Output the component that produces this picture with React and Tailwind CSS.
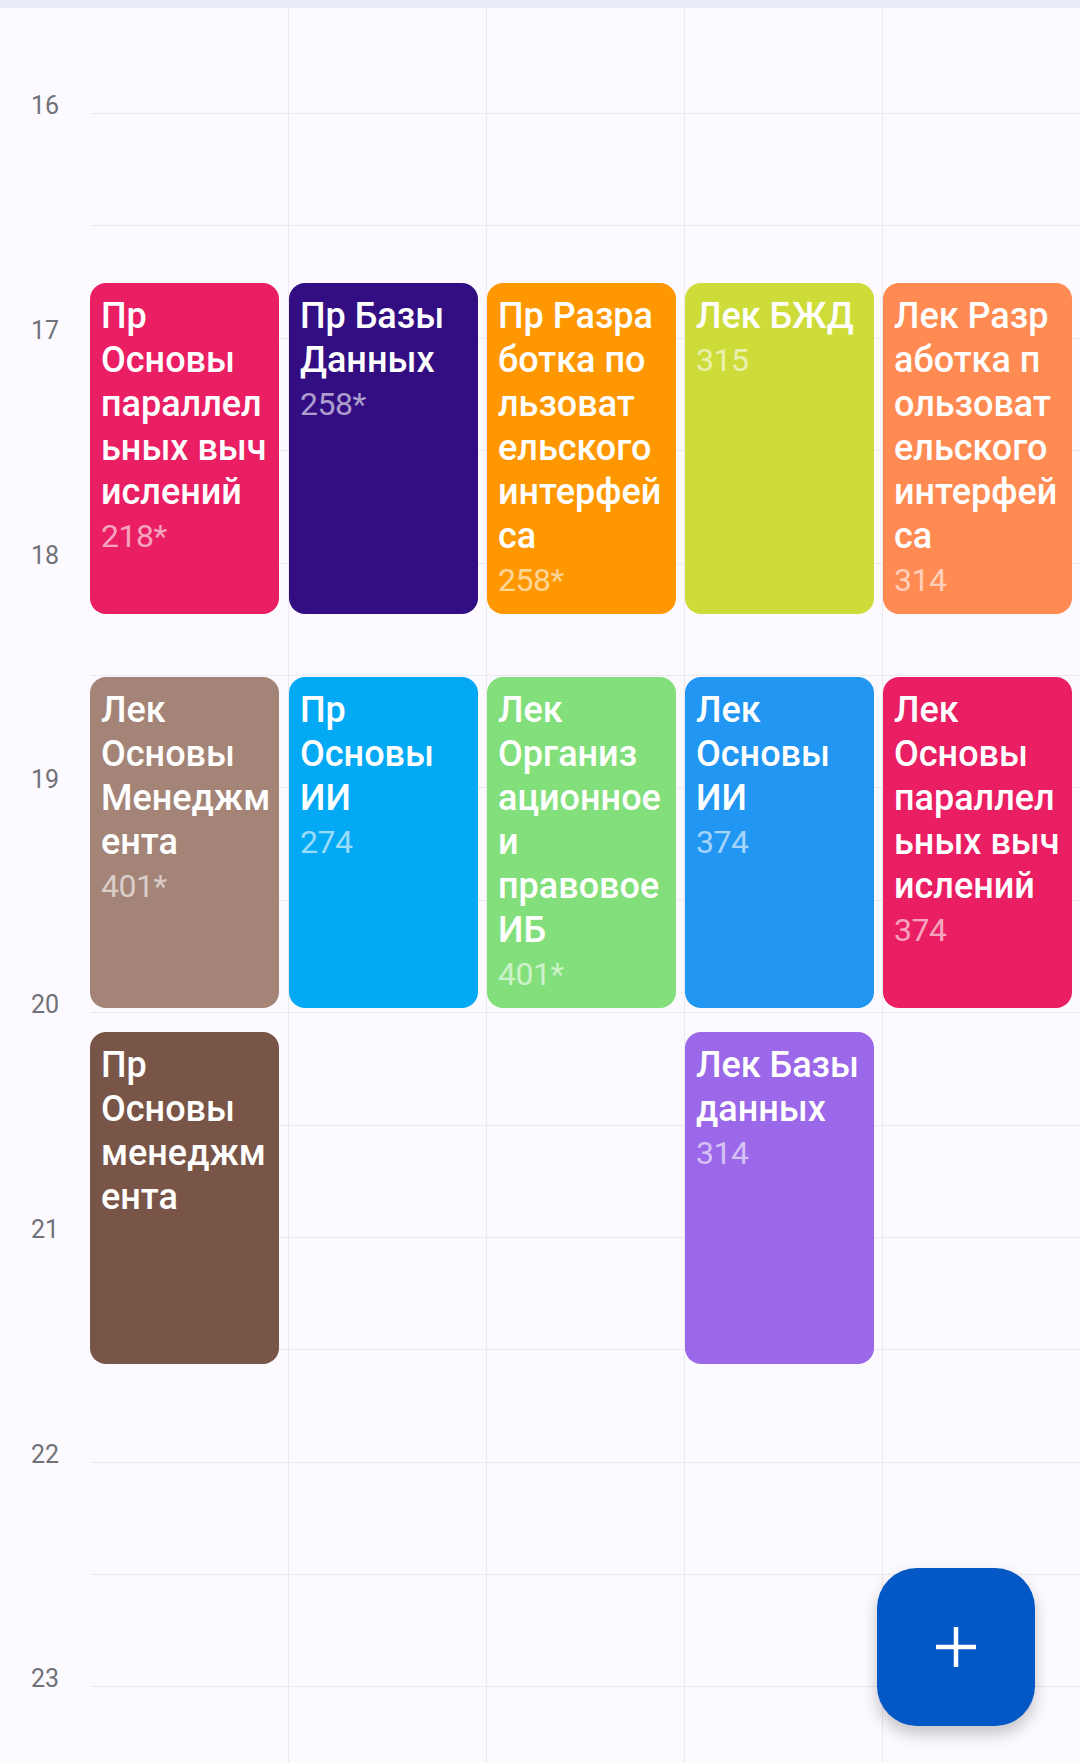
import React from "react";

const HALF_HOUR = 112.4;
const PX_PER_MIN = HALF_HOUR / 30;

const events = [
  { col: 0, start: 45, bg: "bg-[#e91e63]", lines: ["Пр", "Основы", "параллел", "ьных выч", "ислений"], room: "218*" },
  { col: 1, start: 45, bg: "bg-[#330e82]", lines: ["Пр Базы", "Данных"], room: "258*" },
  { col: 2, start: 45, bg: "bg-[#ff9800]", lines: ["Пр Разра", "ботка по", "льзоват", "ельского", "интерфей", "са"], room: "258*" },
  { col: 3, start: 45, bg: "bg-[#cddc39]", lines: ["Лек БЖД"], room: "315" },
  { col: 4, start: 45, bg: "bg-[#ff8a52]", lines: ["Лек Разр", "аботка п", "ользоват", "ельского", "интерфей", "са"], room: "314" },
  { col: 0, start: 150, bg: "bg-[#a38477]", lines: ["Лек", "Основы", "Менеджм", "ента"], room: "401*" },
  { col: 1, start: 150, bg: "bg-[#03a9f4]", lines: ["Пр", "Основы", "ИИ"], room: "274" },
  { col: 2, start: 150, bg: "bg-[#83df7b]", lines: ["Лек", "Организ", "ационное", "и", "правовое", "ИБ"], room: "401*" },
  { col: 3, start: 150, bg: "bg-[#2196f3]", lines: ["Лек", "Основы", "ИИ"], room: "374" },
  { col: 4, start: 150, bg: "bg-[#e91e63]", lines: ["Лек", "Основы", "параллел", "ьных выч", "ислений"], room: "374" },
  { col: 0, start: 245, bg: "bg-[#795548]", lines: ["Пр", "Основы", "менеджм", "ента"], room: "" },
  { col: 3, start: 245, bg: "bg-[#9a68e8]", lines: ["Лек Базы", "данных"], room: "314" },
];

// row index -> hour label (rows end on a half-hour line)
const rows = Array.from({ length: 16 }, (_, i) => (i % 2 === 0 ? String(16 + i / 2) : ""));

function EventCard({ ev }) {
  return (
    <div
      className={`absolute left-0 w-[189px] rounded-[16px] pl-[11px] pt-[11px] overflow-hidden ${ev.bg}`}
      style={{ top: 106.5 + ev.start * PX_PER_MIN, height: 90 * PX_PER_MIN - 6 }}
    >
      {ev.lines.map((line, i) => (
        <div key={i} className="whitespace-nowrap text-[36px] leading-[44px] font-medium text-white">
          {line}
        </div>
      ))}
      {ev.room && (
        <div className="text-[32px] leading-[44px] tracking-[-0.5px] text-white/60">{ev.room}</div>
      )}
    </div>
  );
}

export default function App() {
  return (
    <div className="relative w-[1080px] h-[1763px] overflow-hidden bg-[#fcfaff] font-['Roboto',sans-serif]">
      <div className="h-[8px] bg-[#e7ecf8]" />
      <div className="flex">
        {/* hour labels */}
        <div className="w-[90px] shrink-0">
          {rows.map((label, i) => (
            <div
              key={i}
              className={`flex items-end justify-center ${i === 0 ? "h-[106px]" : "h-[112.4px]"}`}
            >
              {label && (
                <span className="text-[25px] leading-4 text-[#717178]">{label}</span>
              )}
            </div>
          ))}
        </div>

        {/* grid */}
        <div className="relative flex-1">
          {rows.map((_, i) => (
            <div
              key={i}
              className={`border-b border-[#ebe8ee] ${i === 0 ? "h-[106px]" : "h-[112.4px]"}`}
            />
          ))}
          <div className="absolute inset-0 flex">
            {[0, 1, 2, 3, 4].map((col) => (
              <div
                key={col}
                className={`relative w-[198px] shrink-0 ${col > 0 ? "border-l border-[#ebe8ee]" : ""}`}
              >
                {events
                  .filter((ev) => ev.col === col)
                  .map((ev, i) => (
                    <EventCard key={i} ev={ev} />
                  ))}
              </div>
            ))}
          </div>
        </div>
      </div>

      <button className="absolute right-[45px] bottom-[37px] flex h-[158px] w-[158px] items-center justify-center rounded-[40px] bg-[#0458c5] shadow-[0_8px_16px_rgba(0,0,0,0.22)]">
        <svg width="42" height="42" viewBox="0 0 42 42" fill="none">
          <path d="M21 1v40M1 21h40" stroke="#fff" strokeWidth="4.5" />
        </svg>
      </button>
    </div>
  );
}
